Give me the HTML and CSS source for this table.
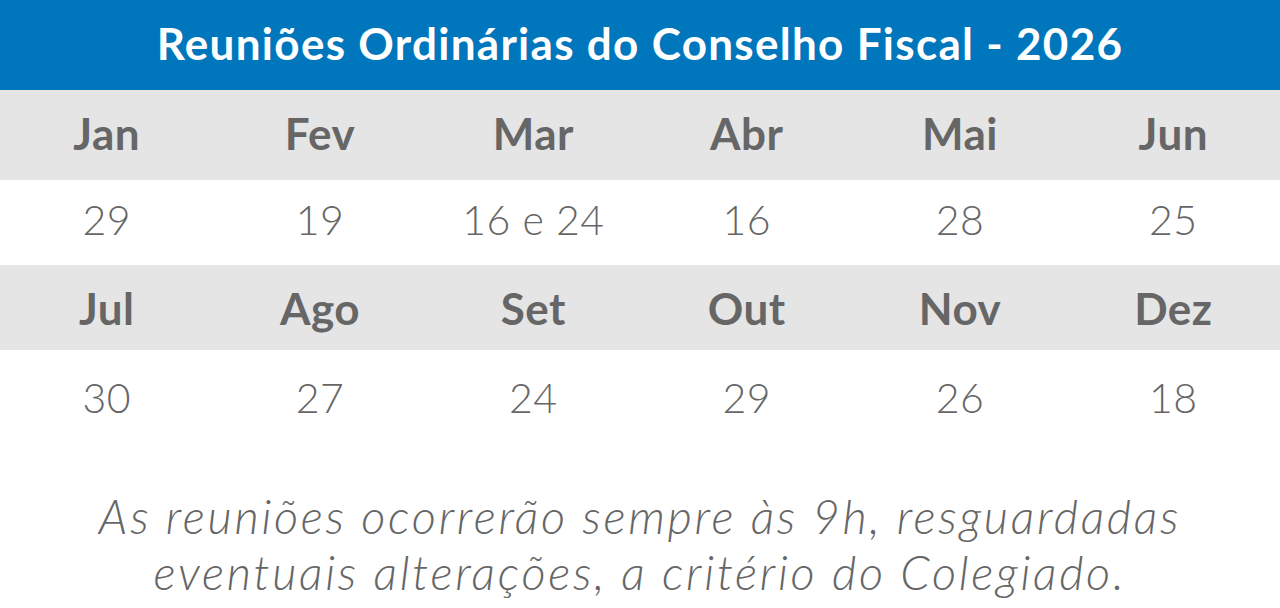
FILE: index.html
```html
<!DOCTYPE html>
<html lang="pt">
<head>
<meta charset="utf-8">
<title>Reuniões Ordinárias do Conselho Fiscal - 2026</title>
<link rel="stylesheet" href="styles.css">
</head>
<body>
<div class="page">
  <header class="title">Reuniões Ordinárias do Conselho Fiscal - 2026</header>
  <div class="row months">
    <div class="cell">Jan</div><div class="cell">Fev</div><div class="cell">Mar</div><div class="cell">Abr</div><div class="cell">Mai</div><div class="cell">Jun</div>
  </div>
  <div class="row dates">
    <div class="cell">29</div><div class="cell">19</div><div class="cell">16 e 24</div><div class="cell">16</div><div class="cell">28</div><div class="cell">25</div>
  </div>
  <div class="row months">
    <div class="cell">Jul</div><div class="cell">Ago</div><div class="cell">Set</div><div class="cell">Out</div><div class="cell">Nov</div><div class="cell">Dez</div>
  </div>
  <div class="row dates last">
    <div class="cell">30</div><div class="cell">27</div><div class="cell">24</div><div class="cell">29</div><div class="cell">26</div><div class="cell">18</div>
  </div>
  <p class="note">As reuniões ocorrerão sempre às 9h, resguardadas<br>eventuais alterações, a critério do Colegiado.</p>
</div>
</body>
</html>
```
FILE: styles.css
```css
html, body {
  margin: 0;
  padding: 0;
  background: #ffffff;
}
.page {
  width: 1280px;
  height: 608px;
  overflow: hidden;
  font-family: "Lato", "Liberation Sans", sans-serif;
  color: #666666;
}
.title {
  height: 90px;
  background: #0077bd;
  color: #ffffff;
  font-weight: 700;
  font-size: 44px;
  letter-spacing: 1.3px;
  display: flex;
  align-items: center;
  justify-content: center;
  padding-bottom: 4px;
  box-sizing: border-box;
}
.row {
  display: grid;
  grid-template-columns: repeat(6, 1fr);
  align-items: center;
}
.months {
  height: 90px;
  background: #e5e5e5;
  font-weight: 700;
  font-size: 44px;
  letter-spacing: 0.5px;
  padding-bottom: 4px;
  box-sizing: border-box;
}
.dates {
  height: 85px;
  background: #ffffff;
  font-weight: 300;
  font-size: 41px;
  letter-spacing: 0.5px;
  padding-bottom: 6px;
  box-sizing: border-box;
}
.dates.last {
  padding-top: 10px;
  padding-bottom: 0;
}
.row + .row.months { height: 85px; padding-bottom: 0; }
.cell {
  text-align: center;
}
.note {
  margin: 53px 0 0;
  text-align: center;
  font-style: italic;
  font-weight: 300;
  font-size: 47px;
  letter-spacing: 2.7px;
  line-height: 56px;
}
```
